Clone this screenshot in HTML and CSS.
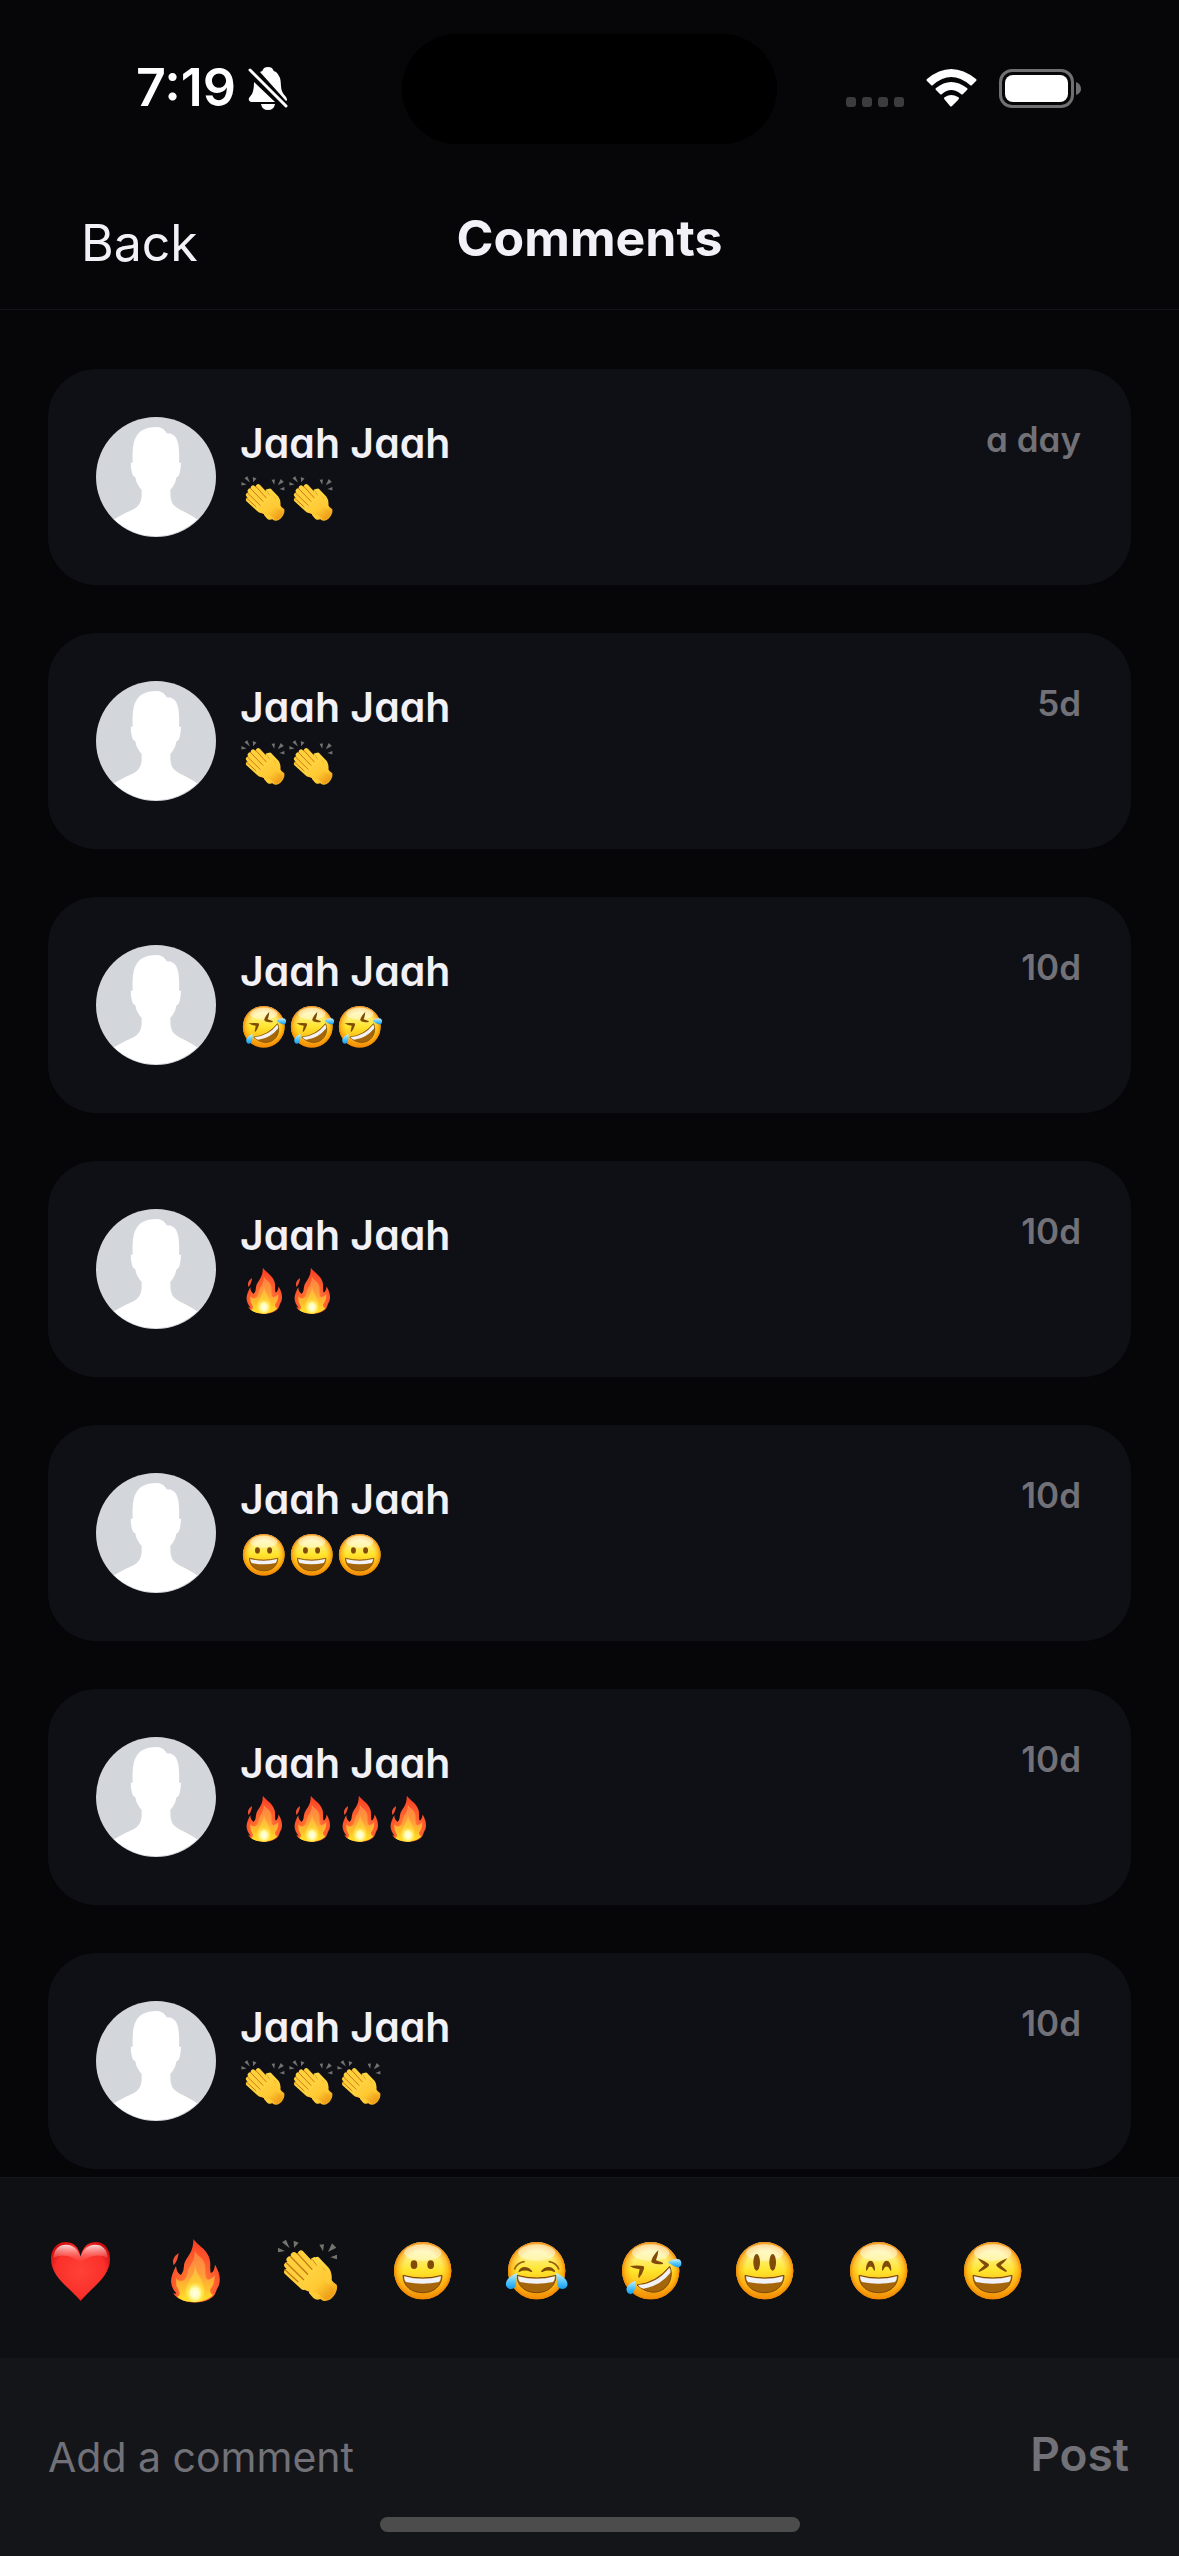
FILE: index.html
```
<!DOCTYPE html>
<html lang="en">
<head>
<meta charset="utf-8">
<meta name="viewport" content="width=device-width, initial-scale=1">
<title>Comments</title>
<link rel="stylesheet" href="styles.css">
</head>
<body>
<svg class="defs" width="0" height="0" aria-hidden="true">
  <defs>
    <linearGradient id="g-top" x1="0" y1="0" x2="0" y2="1">
      <stop offset="0" stop-color="#fff9d8"/><stop offset=".25" stop-color="#fff080"/><stop offset=".5" stop-color="#ffe52c"/><stop offset=".78" stop-color="#fdbb1a"/><stop offset="1" stop-color="#e08006"/>
    </linearGradient>
    <radialGradient id="g-rim" cx=".5" cy=".5" r=".5">
      <stop offset=".68" stop-color="#ff9d0a" stop-opacity="0"/><stop offset=".88" stop-color="#ff9c08" stop-opacity=".55"/><stop offset="1" stop-color="#ee8604"/>
    </radialGradient>
    <linearGradient id="g-tear" x1="0" y1="0" x2="0" y2="1">
      <stop offset="0" stop-color="#c9f1ff"/><stop offset=".5" stop-color="#5cc8fa"/><stop offset="1" stop-color="#109cf0"/>
    </linearGradient>
    <radialGradient id="g-heart" cx=".5" cy=".5" r=".6">
      <stop offset="0" stop-color="#ff4238"/><stop offset=".7" stop-color="#fa2f2a"/><stop offset="1" stop-color="#c80a0c"/>
    </radialGradient>
    <linearGradient id="g-shine" x1="0" y1="0" x2="0" y2="1">
      <stop offset="0" stop-color="#fff" stop-opacity=".85"/><stop offset="1" stop-color="#ff7068" stop-opacity="0"/>
    </linearGradient>
    <radialGradient id="g-fire" cx=".5" cy=".75" r=".75">
      <stop offset="0" stop-color="#ff9a2e"/><stop offset=".5" stop-color="#ff6230"/><stop offset="1" stop-color="#fb3a22"/>
    </radialGradient>
    <linearGradient id="g-flame" x1="0" y1="0" x2="0" y2="1">
      <stop offset="0" stop-color="#ff8040"/><stop offset=".45" stop-color="#ff9a3c"/><stop offset=".75" stop-color="#ffc02c"/><stop offset="1" stop-color="#ffe62a"/>
    </linearGradient>
    <radialGradient id="g-core" cx=".5" cy=".62" r=".5">
      <stop offset="0" stop-color="#fffff0"/><stop offset=".45" stop-color="#fffbb0"/><stop offset="1" stop-color="#ffe92c" stop-opacity="0"/>
    </radialGradient>
    <linearGradient id="g-hand" x1="0" y1="0" x2=".8" y2="1">
      <stop offset="0" stop-color="#ffdf50"/><stop offset=".7" stop-color="#ffc933"/><stop offset="1" stop-color="#ee9e18"/>
    </linearGradient>

    <symbol id="face" viewBox="0 0 198 198">
      <circle cx="98" cy="98" r="86" fill="url(#g-top)"/>
      <circle cx="98" cy="98" r="86" fill="url(#g-rim)"/>
      <ellipse cx="98" cy="44" rx="56" ry="25" fill="#fffde8" opacity=".5"/>
    </symbol>
    <symbol id="mouth" viewBox="0 0 198 198">
      <path d="M39 112Q98 128 156 112C156 145 130 164 98 164C65 164 39 145 39 112Z" fill="#a5650a" stroke="#7c4705" stroke-width="3" stroke-linejoin="round"/>
      <path d="M42 115Q98 130 153 115Q153 126 147 132Q98 143 48 132Q42 126 42 115Z" fill="#f1f2f7"/>
    </symbol>
    <symbol id="grin" viewBox="0 0 198 198">
      <use href="#face"/><use href="#mouth"/>
      <ellipse cx="72" cy="80" rx="10" ry="13" fill="#804a08"/><ellipse cx="122" cy="80" rx="10" ry="13" fill="#804a08"/>
    </symbol>
    <symbol id="smiley" viewBox="0 0 198 198">
      <use href="#face"/><use href="#mouth"/>
      <ellipse cx="74" cy="73" rx="10" ry="25" fill="#804a08"/><ellipse cx="122" cy="73" rx="10" ry="25" fill="#804a08"/>
    </symbol>
    <symbol id="smile" viewBox="0 0 198 198">
      <use href="#face"/><use href="#mouth"/>
      <path d="M60 97C60 59 87 59 87 97Q84 101 82 94C78 83 69 83 65 94Q62 101 60 97ZM108 97C108 59 136 59 136 97Q133 101 131 94C127 83 117 83 113 94Q110 101 108 97Z" fill="#804a08"/>
    </symbol>
    <symbol id="squint" viewBox="0 0 198 198">
      <use href="#face"/><use href="#mouth"/>
      <path d="M53 61Q78 71 86 78Q88 81 86 84Q78 93 57 102Q54 101 57 97L73 82Q62 74 53 61ZM142 61Q118 71 110 78Q107 81 110 84Q118 93 138 102Q143 101 139 97L122 82Q133 74 142 61Z" fill="#804a08"/>
    </symbol>
    <symbol id="joy" viewBox="0 0 198 198">
      <use href="#face"/><use href="#mouth"/>
      <path d="M32 93Q40 74 60 71M136 71Q156 74 164 93" fill="none" stroke="#9c6008" stroke-width="5" stroke-linecap="round"/>
      <path d="M43 101C48 83 72 82 85 100Q84 104 79 101Q62 94 46 102ZM111 100C122 82 148 83 154 101L151 102Q134 94 117 101Q112 104 111 100Z" fill="#804a08"/>
      <path d="M39 105C19 114 3 126 6 142C10 157 33 157 36 141Z" fill="url(#g-tear)"/>
      <path d="M156 105C176 114 193 126 190 142C186 157 164 157 160 141Z" fill="url(#g-tear)"/>
    </symbol>
    <symbol id="rofl" viewBox="0 0 198 198">
      <use href="#face"/>
      <path d="M57 141Q115 135 155 85C166 108 158 143 130 157C104 170 76 158 57 141Z" fill="#a5650a" stroke="#7c4705" stroke-width="3" stroke-linejoin="round"/>
      <path d="M60 141Q118 136 154 89Q160 98 156 106Q126 144 76 152Q66 150 60 141Z" fill="#f1f2f7"/>
      <path d="M35 84Q58 81 76 84Q80 87 78 92Q74 107 63 120Q60 119 61 113L65 94Q49 94 35 84ZM121 36Q104 54 100 68Q100 73 104 75Q118 81 135 78Q137 75 131 73L114 67Q120 53 121 36Z" fill="#804a08"/>
      <path d="M150 73Q168 60 183 64C193 69 192 84 183 88Q172 90 150 73Z" fill="url(#g-tear)"/>
      <path d="M52 128Q30 137 26 151C24 164 32 169 39 168Q54 164 52 128Z" fill="url(#g-tear)"/>
    </symbol>
    <symbol id="heart" viewBox="0 0 198 198">
      <path d="M98 56C92 27 77 12 52 12C27 12 9 33 9 62C9 116 61 146 98 189C134 146 186 116 186 62C186 33 169 12 144 12C119 12 104 27 98 56Z" fill="url(#g-heart)"/>
      <path d="M97 55C87 32 76 20 54 20C32 20 18 34 16 60Q56 40 97 75Q139 40 179 60C178 34 163 20 142 20C120 20 108 32 97 55Z" fill="url(#g-shine)"/>
    </symbol>
    <symbol id="fire" viewBox="0 0 198 198">
      <path d="M94 3C108 24 145 38 145 78Q144 91 146 105Q157 102 159 80C167 94 175 109 173 131Q172 143 166 151Q161 164 158 170Q153 177 142 184C118 197 79 197 56 184Q40 177 33 164Q40 169 43 166Q29 153 27 130Q27 112 42 84Q44 105 57 111Q66 99 66 84C69 57 95 50 94 3Z" fill="url(#g-fire)"/>
      <path d="M50 45C34 56 30 68 35 82C45 72 48 58 50 45Z" fill="#f45034"/>
      <path d="M98 36C104 58 130 57 130 92C130 108 129 119 137 125Q149 124 158 111C158 132 154 143 145 153Q143 167 153 170C132 196 67 199 46 176C59 171 51 157 43 143Q43 134 42 120C50 133 71 132 75 112C80 79 99 78 98 36Z" fill="url(#g-flame)"/>
      <path d="M99 80C102 107 120 119 126 148C130 171 118 193 99 193C78 193 66 171 71 150C77 128 99 112 99 80Z" fill="#ffe83a" opacity=".45"/>
      <ellipse cx="99" cy="157" rx="31" ry="36" fill="url(#g-core)"/>
    </symbol>
    <symbol id="clap" viewBox="0 0 198 198">
      <path d="M6 29L27 39L6 43ZM18 13L30 5L41 31ZM53 8L68 14L54 30ZM130 20L144 19L141 40ZM156 42L168 16L181 29ZM163 58L183 50V64Z" fill="#73736e"/>
      <path d="M106 61Q115 55 119 70L117 60Q125 51 133 63L158 89Q169 103 167 126Q170 133 182 140C189 157 169 190 147 189Q140 190 133 183Q122 188 112 180L99 165Z" fill="url(#g-hand)"/>
      <path d="M109 64L135 100M121 63L147 98" stroke="#cc8518" stroke-width="3" fill="none"/>
      <path d="M34 102L82 146M34 82L90 138M41 65L105 125M54 52L115 112M75 47L125 100" stroke="#ffcf3c" stroke-width="19" stroke-linecap="round" fill="none"/>
      <path d="M118 86Q122 91 126 78C116 69 105 56 117 57Q128 63 145 95Q157 118 149 132L173 149Q178 174 149 185Q139 178 123 165Q92 164 69 145L57 126Z" fill="url(#g-hand)"/>
      <path d="M65 47L108 94M45 57L95 109M31 74L83 125M27 95L66 131" stroke="#c57a12" stroke-width="4" stroke-linecap="round" fill="none"/>
    </symbol>
    <symbol id="avatar" viewBox="0 0 360 360">
      <circle cx="180" cy="180" r="180" fill="#d3d6db"/>
      <path d="M54 307Q90 286 114 276Q134 265 137 239V219Q121 202 118 181Q106 180 104 139L110 136C108 68 118 31 182 30Q204 31 212 49C242 48 252 72 249 136L255 139Q253 180 241 182Q238 202 223 219Q222 243 228 257Q236 271 262 283Q284 294 304 307A180 180 0 0 1 54 307Z" fill="#fff"/>
    </symbol>
  </defs>
</svg>

<div class="app">
  <div class="status">
    <div class="status-left">
      <span class="clock">7:19</span>
      <svg class="bell" viewBox="0 0 40 43" role="img" aria-label="Silent mode">
        <path d="M12 5Q15 4 16 1Q20-1 24 1Q25 4 28 5Q33 9 33 19Q33 25 38 30Q40 33 38 34ZM6 15L27 35H3Q0 34 1 31L4 27Q6 23 6 15ZM13 37H27Q26 43 20 43Q14 43 13 37Z" fill="#fff"/>
        <path d="M2 3L39 41" stroke="#060608" stroke-width="7"/>
        <path d="M2 3L38 39" stroke="#fff" stroke-width="3" stroke-linecap="round"/>
      </svg>
    </div>
    <div class="island"></div>
    <div class="status-right">
      <svg class="dots" viewBox="0 0 58 38" aria-hidden="true"><g fill="#3c3c3d"><rect y="28" width="10" height="10" rx="3"/><rect x="16" y="28" width="10" height="10" rx="3"/><rect x="32" y="28" width="10" height="10" rx="3"/><rect x="48" y="28" width="10" height="10" rx="3"/></g></svg>
      <svg class="wifi" viewBox="0 0 51 38" role="img" aria-label="Wi-Fi">
        <path d="M1 10Q25-10 50 10Q51 11 50 12L46 16Q45 17 44 16Q25 0 7 16Q6 17 5 16L1 12Q0 11 1 10ZM10 19Q25 7 41 19Q42 20 41 21L37 25Q36 26 35 25Q25 17 16 25Q15 26 14 25L10 21Q9 20 10 19ZM19 28Q25 24 32 28Q34 29 32 31L26 37Q25 38 24 37L19 31Q17 29 19 28Z" fill="#fff"/>
      </svg>
      <svg class="battery" viewBox="0 0 82 39" role="img" aria-label="Battery full">
        <rect x="1.500" y="1.500" width="72" height="36" rx="11.500" fill="none" stroke="#707071" stroke-width="3"/>
        <rect x="6" y="6" width="63" height="27" rx="8" fill="#fff"/>
        <path d="M77 13Q82 15 82 20Q82 24 77 26Z" fill="#707071"/>
      </svg>
    </div>
  </div>

  <header class="header">
    <button class="back" type="button">Back</button>
    <h1 class="title">Comments</h1>
  </header>

  <main>
    <ul class="list">
      <li class="card">
        <svg class="avatar"><use href="#avatar"/></svg>
        <div class="body"><h2 class="name">Jaah Jaah</h2><div class="message" role="img" aria-label="Clapping hands, twice"><svg><use href="#clap"/></svg><svg><use href="#clap"/></svg></div></div>
        <time class="time">a day</time>
      </li>
      <li class="card">
        <svg class="avatar"><use href="#avatar"/></svg>
        <div class="body"><h2 class="name">Jaah Jaah</h2><div class="message" role="img" aria-label="Clapping hands, twice"><svg><use href="#clap"/></svg><svg><use href="#clap"/></svg></div></div>
        <time class="time">5d</time>
      </li>
      <li class="card">
        <svg class="avatar"><use href="#avatar"/></svg>
        <div class="body"><h2 class="name">Jaah Jaah</h2><div class="message" role="img" aria-label="Rolling on the floor laughing, three times"><svg><use href="#rofl"/></svg><svg><use href="#rofl"/></svg><svg><use href="#rofl"/></svg></div></div>
        <time class="time">10d</time>
      </li>
      <li class="card">
        <svg class="avatar"><use href="#avatar"/></svg>
        <div class="body"><h2 class="name">Jaah Jaah</h2><div class="message" role="img" aria-label="Fire, twice"><svg><use href="#fire"/></svg><svg><use href="#fire"/></svg></div></div>
        <time class="time">10d</time>
      </li>
      <li class="card">
        <svg class="avatar"><use href="#avatar"/></svg>
        <div class="body"><h2 class="name">Jaah Jaah</h2><div class="message" role="img" aria-label="Grinning face, three times"><svg><use href="#grin"/></svg><svg><use href="#grin"/></svg><svg><use href="#grin"/></svg></div></div>
        <time class="time">10d</time>
      </li>
      <li class="card">
        <svg class="avatar"><use href="#avatar"/></svg>
        <div class="body"><h2 class="name">Jaah Jaah</h2><div class="message" role="img" aria-label="Fire, four times"><svg><use href="#fire"/></svg><svg><use href="#fire"/></svg><svg><use href="#fire"/></svg><svg><use href="#fire"/></svg></div></div>
        <time class="time">10d</time>
      </li>
      <li class="card">
        <svg class="avatar"><use href="#avatar"/></svg>
        <div class="body"><h2 class="name">Jaah Jaah</h2><div class="message" role="img" aria-label="Clapping hands, three times"><svg><use href="#clap"/></svg><svg><use href="#clap"/></svg><svg><use href="#clap"/></svg></div></div>
        <time class="time">10d</time>
      </li>
    </ul>
  </main>

  <footer class="footer">
    <div class="reactions">
      <button type="button" aria-label="Heart"><svg><use href="#heart"/></svg></button>
      <button type="button" aria-label="Fire"><svg><use href="#fire"/></svg></button>
      <button type="button" aria-label="Clap"><svg><use href="#clap"/></svg></button>
      <button type="button" aria-label="Grin"><svg><use href="#grin"/></svg></button>
      <button type="button" aria-label="Tears of joy"><svg><use href="#joy"/></svg></button>
      <button type="button" aria-label="Rolling laughter"><svg><use href="#rofl"/></svg></button>
      <button type="button" aria-label="Smiley"><svg><use href="#smiley"/></svg></button>
      <button type="button" aria-label="Smile"><svg><use href="#smile"/></svg></button>
      <button type="button" aria-label="Laugh"><svg><use href="#squint"/></svg></button>
    </div>
    <form class="composer">
      <input class="field" type="text" aria-label="Add a comment" placeholder="Add a comment">
      <button class="post" type="button">Post</button>
    </form>
    <div class="home"></div>
  </footer>
</div>
</body>
</html>
```
FILE: styles.css
```
* {
  box-sizing: border-box;
}

body {
  margin: 0;
  background: #060608;
  color: #f2f1f7;
  font-family: Inter, "Liberation Sans", sans-serif;
}

button,
input {
  margin: 0;
  padding: 0;
  border: 0;
  background: none;
  color: inherit;
  font: inherit;
}

svg {
  display: block;
  flex: none;
}

.defs {
  position: absolute;
}

.app {
  display: flex;
  flex-direction: column;
  min-height: 100vh;
}

.status {
  display: grid;
  grid-template-columns: minmax(0, 1fr) 375px minmax(0, 1fr);
  align-items: center;
  padding: 34px 0 33px;
  color: #fff;
}

.status-left {
  display: flex;
  align-items: center;
  gap: 12px;
  padding: 0 0 2px 136px;
}

.clock {
  font-size: 52px;
  line-height: 60px;
  font-weight: 600;
}

.bell {
  width: 40px;
  height: 43px;
}

.island {
  height: 110px;
  border-radius: 55px;
  background: #000;
}

.status-right {
  display: flex;
  justify-content: flex-end;
  gap: 22px;
  padding: 0 98px 2px 0;
}

.dots {
  width: 58px;
  height: 38px;
}

.wifi {
  width: 51px;
  height: 38px;
}

.battery {
  width: 82px;
  height: 39px;
}

.header {
  display: grid;
  grid-template-columns: 1fr auto 1fr;
  align-items: center;
  height: 133px;
  border-bottom: 1px solid #131418;
}

.back {
  justify-self: start;
  padding-left: 81px;
  font-size: 50px;
  line-height: 60px;
}

.title,
.name,
.time,
.post {
  font-feature-settings: "cv11";
}

.title {
  margin: 0;
  padding-bottom: 10px;
  font-size: 50px;
  line-height: 60px;
  font-weight: 700;
}

.list {
  display: flex;
  flex-direction: column;
  gap: 48px;
  margin: 0;
  padding: 59px 48px 8px;
  list-style: none;
}

.card {
  display: flex;
  align-items: flex-start;
  padding: 48px;
  border-radius: 48px;
  background: #0f1015;
}

.avatar {
  width: 120px;
  height: 120px;
}

.body {
  flex: 1;
  padding-left: 24px;
}

.name {
  margin: 0;
  padding-bottom: 6px;
  font-size: 41px;
  line-height: 52px;
  font-weight: 600;
}

.message {
  display: flex;
}

.message svg {
  width: 48px;
  height: 48px;
}

.time {
  padding-right: 2px;
  color: #717177;
  font-size: 35px;
  line-height: 44px;
  font-weight: 600;
}

.footer {
  position: sticky;
  bottom: 0;
  margin-top: auto;
  padding-bottom: 24px;
  background: #141519;
}

.reactions {
  display: flex;
  gap: 48px;
  padding: 60px 48px 54px;
  border-top: 1px solid #15161a;
  background: #0f1014;
}

.reactions svg {
  width: 66px;
  height: 66px;
}

.composer {
  display: flex;
  align-items: center;
  padding: 48px 48px 9px;
}

.field {
  flex: 1;
  min-width: 0;
  height: 102px;
  outline: none;
  font-size: 41px;
}

.field::placeholder {
  color: #717177;
  opacity: 1;
}

.post {
  padding: 0 2px 6px 0;
  color: #717177;
  font-size: 46px;
  line-height: 56px;
  font-weight: 600;
}

.home {
  width: 420px;
  height: 15px;
  margin: 0 auto;
  border-radius: 8px;
  background: #4c4c4c;
}
```
